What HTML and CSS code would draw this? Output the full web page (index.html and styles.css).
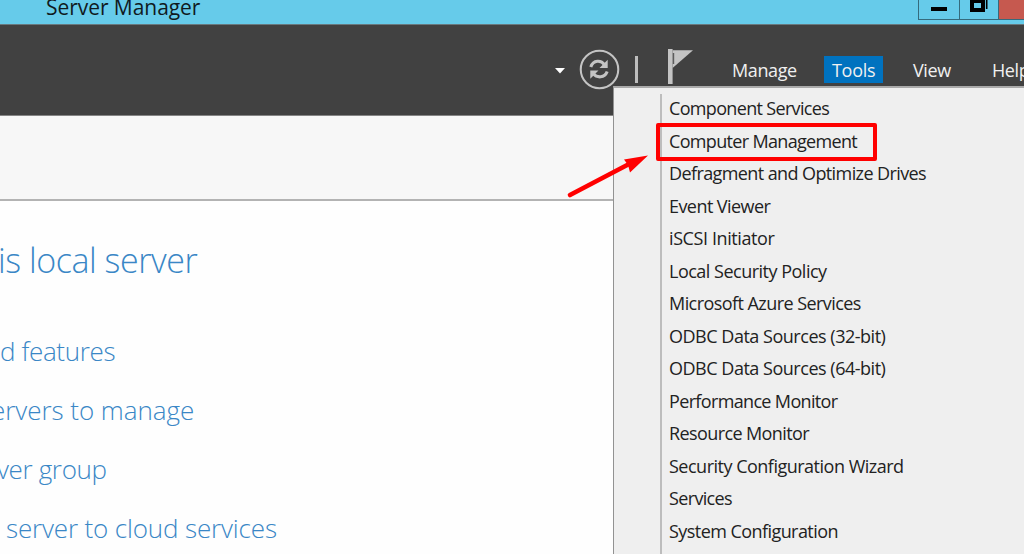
FILE: index.html
```html
<!DOCTYPE html>
<html lang="en">
<head>
<meta charset="utf-8">
<title>Server Manager</title>
<link rel="stylesheet" href="styles.css">
</head>
<body>
<div class="window">
  <header class="titlebar">
    <h1 class="title">Server Manager</h1>
    <div class="controls">
      <span class="control minimize"><svg width="40" height="20"><path d="M12 7h16v4H12z"/></svg></span>
      <span class="control restore"><svg width="38" height="20"><path d="M10 0h15v12H10zM14 3v5h7V3z" fill-rule="evenodd"/><path d="M26.700 0v9" stroke="#000" stroke-width="1.600"/></svg></span>
      <span class="control close"></span>
    </div>
  </header>
  <nav class="toolbar">
    <svg class="caret" width="12" height="8" viewBox="0 0 12 8"><path d="M1 1h10L6 6.500z" fill="#fff"/></svg>
    <svg class="refresh" width="40" height="40" viewBox="0 0 40 40" fill="none" stroke="#c4c4c4">
      <circle cx="20" cy="20" r="18.300" stroke-width="2"/>
      <g stroke-width="3"><path d="M11.500 17.500C14 10.500 21.500 10.500 25 15.500"/><path d="M27.500 22C25 28.500 17.500 28.500 14 24"/></g>
      <path d="M28 10.500v8H20zM11 29v-8H19z" fill="#c4c4c4" stroke="none"/>
    </svg>
    <span class="divider"></span>
    <svg class="flag" width="26" height="38" viewBox="0 0 26 38"><path d="M0 1h4.600v35H0z" fill="#c4c4c4"/><path d="M4.600 2.300h20.400L4.600 20z" fill="#c4c4c4"/><path d="M5.500 5v11" stroke="#5c5c5c" stroke-width="1.400"/></svg>
    <span class="item manage">Manage</span>
    <span class="item tools">Tools</span>
    <span class="item view">View</span>
    <span class="item help">Help</span>
  </nav>
  <div class="band"></div>
  <main class="content">
    <h2 class="heading">is local server</h2>
    <a class="link l1">d features</a>
    <a class="link l2">ervers to manage</a>
    <a class="link l3">ver group</a>
    <a class="link l4">server to cloud services</a>
  </main>
  <div class="menu">
    <ul class="entries">
      <li class="m1">Component Services</li>
      <li class="m2">Computer Management</li>
      <li class="m3">Defragment and Optimize Drives</li>
      <li class="m4">Event Viewer</li>
      <li class="m5">iSCSI Initiator</li>
      <li class="m6">Local Security Policy</li>
      <li class="m7">Microsoft Azure Services</li>
      <li class="m8">ODBC Data Sources (32-bit)</li>
      <li class="m9">ODBC Data Sources (64-bit)</li>
      <li class="m10">Performance Monitor</li>
      <li class="m11">Resource Monitor</li>
      <li class="m12">Security Configuration Wizard</li>
      <li class="m13">Services</li>
      <li class="m14">System Configuration</li>
    </ul>
  </div>
  <div class="highlight"></div>
  <svg class="arrow" width="90" height="54" viewBox="0 0 90 54"><path d="M5 45L66 13" stroke="#f00" stroke-width="4.600" stroke-linecap="round"/><path d="M83 5.500L59 9.500L63 15L65 22.500z" fill="#f00"/></svg>
</div>
</body>
</html>
```
FILE: styles.css
```css
* { box-sizing: border-box; }
body { margin: 0; font-family: "Open Sans", "Noto Sans", sans-serif; }
.window { position: relative; width: 1024px; height: 554px; overflow: hidden; background: #fefefe; display: flex; flex-direction: column; }
.titlebar { height: 24px; flex: none; background: #66cbea; display: flex; justify-content: space-between; padding-left: 46px; }
.title { margin: -7px 0 0; font-size: 21px; font-weight: 400; line-height: 28px; color: #101a1e; white-space: nowrap; letter-spacing: -.05px; }
.controls { display: flex; height: 20px; }
.control { border-bottom: 1px solid #356b7d; border-left: 1px solid #356b7d; overflow: hidden; }
.control svg { display: block; }
.minimize { width: 41px; }
.restore { width: 39px; }
.close { width: 26px; background: #c6594f; }
.toolbar { height: 92px; flex: none; background: #414141; border-top: 1px solid #68797f; border-bottom: 1px solid #858585; display: flex; align-items: flex-start; padding-left: 554px; }
.toolbar svg { flex: none; }
.caret { margin-top: 42px; }
.refresh { margin: 24px 0 0 12.500px; width: 41px; height: 41px; }
.divider { flex: none; width: 3px; height: 27px; margin: 31px 0 0 15.500px; background: #bdbdbd; }
.flag { margin: 23px 0 0 30px; }
.item { flex: none; height: 27px; margin-top: 31px; font-size: 18px; line-height: 29px; color: #f0f0f0; white-space: nowrap; }
.manage { margin-left: 38px; width: 92px; letter-spacing: -.4px; }
.tools { width: 59px; padding-left: 8px; background: #0072bf; letter-spacing: -.3px; }
.view { margin-left: 30px; width: 79px; letter-spacing: -.4px; }
.help { letter-spacing: -.4px; }
.band { height: 85px; flex: none; background: #f7f7f7; border-bottom: 2px solid #b3b3b3; }
.content { display: flex; flex-direction: column; padding-top: 35px; color: #3a87c6; font-weight: 300; }
.heading { margin: 0 0 38px -2px; font-size: 34px; line-height: 48px; font-weight: 300; white-space: nowrap; letter-spacing: -.45px; }
.link { font-size: 26px; line-height: 59px; height: 59px; white-space: nowrap; letter-spacing: -.15px; }
.l1 { letter-spacing: -.35px; }
.l2 { margin-left: -9px; letter-spacing: -.05px; }
.l3 { margin-left: -3px; letter-spacing: -.35px; }
.l4 { margin-left: 6px; }
.menu { position: absolute; left: 613px; top: 86px; width: 420px; height: 480px; background: #efefef; border: 1px solid #929292; border-top: 2px solid #aaa; padding: 6px 0 0 46px; }
.entries { margin: 0; padding: 0 0 20px 7px; list-style: none; border-left: 2px solid #bdbdbd; font-size: 18px; line-height: 32.540px; color: #222; }
.entries li { height: 32.540px; position: relative; top: -2px; white-space: nowrap; letter-spacing: -.5px; }
.entries .m1, .entries .m2 { letter-spacing: -.67px; }
.entries .m3, .entries .m11 { letter-spacing: -.6px; }
.entries .m4, .entries .m7, .entries .m14 { letter-spacing: -.56px; }
.entries .m5 { letter-spacing: -.4px; }
.entries .m8, .entries .m9 { letter-spacing: -.48px; }
.entries .m10, .entries .m13 { letter-spacing: -.65px; }
.highlight { position: absolute; left: 656px; top: 123px; width: 221px; height: 38px; border: 4px solid #f00; border-radius: 2px; }
.arrow { position: absolute; left: 565px; top: 150px; }
```
